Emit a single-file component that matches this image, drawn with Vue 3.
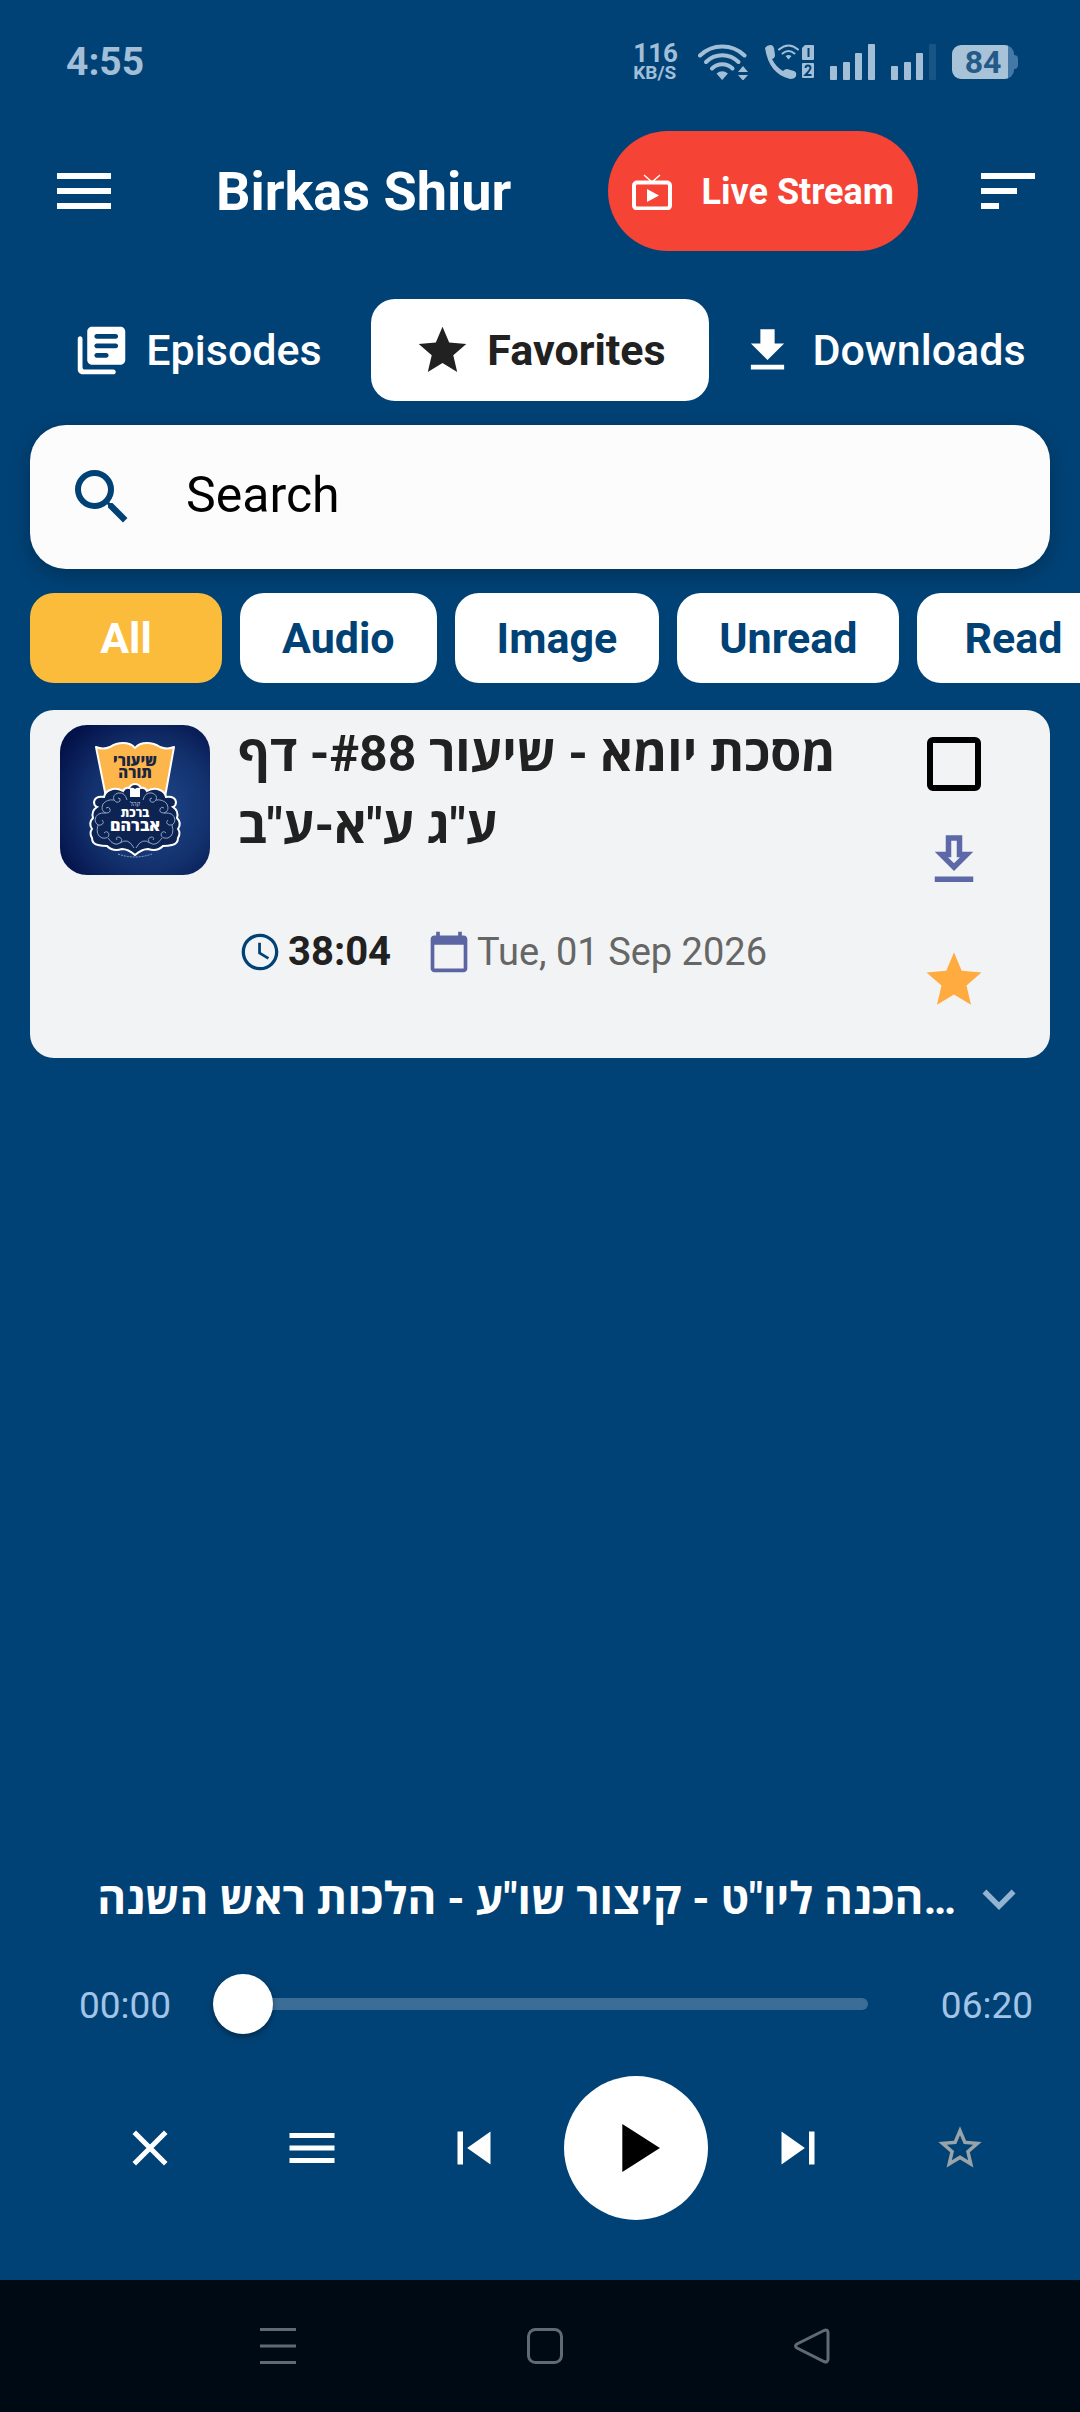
<template>
  <div class="app">
    <div class="status-bar">
      <span class="clock">4:55</span>
      <div class="status-icons">
        <div class="speed">
          <span class="speed-value">116</span>
          <span class="speed-unit">KB/S</span>
        </div>
        <svg class="wifi" viewBox="0 0 50 36">
          <g fill="none" stroke="currentColor" stroke-width="4" stroke-linecap="round">
            <path d="M2 11.500a32 32 0 0 1 44.500 0" />
            <path d="M8 18a23 23 0 0 1 32.500 0" />
            <path d="M14 24.500a14.500 14.500 0 0 1 20.500 0" />
          </g>
          <path d="M18.500 29.500q5.700-4.500 11.400 0l-5.700 6.500zM40 28l5-6 5 6zM40 31l5 5.500 5-5.500z" fill="currentColor" />
        </svg>
        <svg class="call" viewBox="0 0 50 36">
          <path d="M1 4q2-3 6-3 2 0 3 3l1 7q0 3-3 4 4 8 11 12 2-2 4-2l7 2q3 1 2 5-1 3-6 3Q5 30 1 4z" fill="currentColor" />
          <g fill="none" stroke="currentColor" stroke-width="2" stroke-linecap="round">
            <path d="M15 5.500q9.500-8 19 0" />
            <path d="M18.500 9.500q6-5 12 0" />
          </g>
          <path d="M21.500 12q3-2 6 0l-3 3.500z" fill="currentColor" />
          <path d="M41 1h8a1 1 0 0 1 1 1v13a1 1 0 0 1-1 1H39a1 1 0 0 1-1-1V4z" fill="currentColor" />
          <rect x="38" y="19" width="12" height="15" rx="1" fill="currentColor" />
          <path d="M44.500 4v9M41.500 24q0-2.500 2.500-2.500t2.500 2.500q0 1.500-5 7h6" fill="none" stroke="#004276" stroke-width="2" />
        </svg>
        <svg v-for="n in 2" :key="n" class="signal" viewBox="0 0 45 36">
          <rect x="0" y="22" width="7" height="14" rx="1" fill="currentColor" />
          <rect x="13" y="18" width="7" height="18" rx="1" fill="currentColor" />
          <rect x="25" y="9" width="7" height="27" rx="1" fill="currentColor" />
          <rect x="38" y="0" width="7" height="36" rx="1" fill="currentColor" :opacity="n === 1 ? 1 : 0.15" />
        </svg>
        <div class="battery">84</div>
      </div>
    </div>

    <header class="header">
      <button class="icon-btn" aria-label="Menu">
        <svg class="icon-72" viewBox="0 0 24 24"><path :d="icons.menu" /></svg>
      </button>
      <h1 class="app-title">Birkas Shiur</h1>
      <button class="live-btn">
        <svg class="tv" viewBox="0 0 40 36">
          <rect x="2" y="8.500" width="36" height="26" rx="3" fill="none" stroke="currentColor" stroke-width="4" />
          <path d="M12 1l8 7 8-7" fill="none" stroke="currentColor" stroke-width="1.500" />
          <path d="M15 15v13l12-6.500z" fill="currentColor" />
        </svg>
        Live Stream
      </button>
      <button class="icon-btn" aria-label="Sort">
        <svg class="icon-72" viewBox="0 0 24 24"><path :d="icons.sort" /></svg>
      </button>
    </header>

    <nav class="tabs">
      <button
        v-for="tab in tabs"
        :key="tab.name"
        class="tab"
        :class="{ active: activeTab === tab.name }"
        @click="activeTab = tab.name"
      >
        <svg class="tab-icon" viewBox="0 0 24 24"><path :d="tab.icon" /></svg>
        {{ tab.name }}
      </button>
    </nav>

    <label class="search">
      <svg class="icon-72" viewBox="0 0 24 24"><path :d="icons.search" /></svg>
      <input v-model="query" type="text" placeholder="Search" aria-label="Search" />
    </label>

    <div class="chips">
      <button
        v-for="chip in chips"
        :key="chip"
        class="chip"
        :class="{ active: activeChip === chip }"
        @click="activeChip = chip"
      >
        {{ chip }}
      </button>
    </div>

    <article class="card">
      <svg class="thumb" viewBox="0 0 150 150">
        <defs>
          <radialGradient id="night" cx="0.6" cy="0.55" r="0.7">
            <stop offset="0" stop-color="#20488c" />
            <stop offset="0.6" stop-color="#12306c" />
            <stop offset="1" stop-color="#04124a" />
          </radialGradient>
        </defs>
        <rect width="150" height="150" fill="url(#night)" />
        <path
          d="M36 22q7 3 14 0 6-4 13-4 8 0 12 5 4-5 12-5 7 0 13 4 7 3 14 0l-9 50H46z"
          fill="#fdb64b"
          stroke="#fff"
          stroke-width="2"
          stroke-linejoin="round"
        />
        <text x="75" y="41" class="logo-dark" font-size="15">שיעורי</text>
        <text x="75" y="53" class="logo-dark" font-size="15">תורה</text>
        <path
          d="M75 59q4 0 6 4 4-1 6 3 7-4 13-1 5 2 6 7 9-1 10 5 0 4-3 5 6 4 4 11 5 5 1 11 3 4 0 9 0 6-6 7-4 1-9 1-6 6-15 3-6 0-13 6-7-6-13-6-9 3-15-3-5 0-9-1-6-1-6-7-3-5 0-9-4-6 1-11-2-7 4-11-3-1-3-5 1-6 10-5 1-5 6-7 6-3 13 1 2-4 6-3 2-4 6-4z"
          fill="#0d2352"
          stroke="#fff"
          stroke-width="2"
        />
        <g fill="none" stroke="#8ea3c6" stroke-width="1">
          <path v-for="side in logoSides" :key="side" :transform="side" d="M67 75q-2-8-9-7-6 2-4 7 3 4 6 1 1-3-2-3M54 75q-7-1-11 4-3 7 3 9 5 0 4-4-1-3-4-1M46 88q-10-1-11 7 1 6 6 5 4-2 1-5M38 100q-3 10 4 13 7 1 7-4-2-4-5-1M48 113q6 9 12 5 4-4-1-6-4 0-2 3M60 118q8-6 14 5" />
        </g>
        <path d="M70 63q3-1 5 1 2-2 5-1v9H70z" fill="#fff" />
        <text x="75" y="81" class="logo-thin" font-size="6">קהל</text>
        <text x="75" y="92" class="logo-light" font-size="12">ברכת</text>
        <text x="75" y="106" class="logo-light" font-size="16">אברהם</text>
        <path d="M58 129q17 6 34 0" fill="none" stroke="#8ea3c6" stroke-width="1" stroke-dasharray="2 1" />
      </svg>
      <div class="card-body">
        <h2 class="card-title">{{ episode.title }}</h2>
        <div class="meta">
          <svg class="meta-icon clock-icon" viewBox="0 0 24 24"><path :d="icons.schedule" /></svg>
          <span class="duration">{{ episode.duration }}</span>
          <svg class="meta-icon calendar-icon" viewBox="0 0 24 24"><path :d="icons.calendar" /></svg>
          <time class="date">{{ episode.date }}</time>
        </div>
      </div>
      <div class="card-actions">
        <input v-model="selected" type="checkbox" class="check" aria-label="Mark as read" />
        <button class="icon-btn download" aria-label="Download">
          <svg class="icon-66" viewBox="0 0 24 24"><path :d="icons.downloadOutline" /></svg>
        </button>
        <button class="icon-btn favorite" aria-label="Favorite">
          <svg class="icon-66" viewBox="0 0 24 24"><path :d="icons.star" /></svg>
        </button>
      </div>
    </article>

    <section class="player">
      <div class="now-playing">
        <p class="track-title">{{ nowPlaying }}</p>
        <button class="icon-btn collapse" aria-label="Collapse">
          <svg class="icon-66" viewBox="0 0 24 24"><path :d="icons.expand" /></svg>
        </button>
      </div>
      <div class="progress">
        <span class="time">00:00</span>
        <input v-model="position" type="range" min="0" max="380" class="seek" aria-label="Seek" />
        <span class="time">06:20</span>
      </div>
      <div class="controls">
        <button class="icon-btn" aria-label="Close">
          <svg class="icon-60" viewBox="0 0 24 24"><path d="M5.700 5.700l12.600 12.600M18.300 5.700L5.700 18.300" stroke="currentColor" stroke-width="2" /></svg>
        </button>
        <button class="icon-btn" aria-label="Queue">
          <svg class="icon-60" viewBox="0 0 24 24"><path :d="icons.menu" /></svg>
        </button>
        <button class="icon-btn" aria-label="Previous">
          <svg class="icon-66" viewBox="0 0 24 24"><path :d="icons.previous" /></svg>
        </button>
        <button class="icon-btn play" aria-label="Play">
          <svg class="play-icon" viewBox="0 0 24 24"><path d="M8 5v14l11-7z" /></svg>
        </button>
        <button class="icon-btn" aria-label="Next">
          <svg class="icon-66" viewBox="0 0 24 24"><path :d="icons.next" /></svg>
        </button>
        <button class="icon-btn muted" aria-label="Add to favorites">
          <svg class="star-icon" viewBox="0 0 24 24"><path :d="icons.starBorder" /></svg>
        </button>
      </div>
    </section>

    <footer class="system-nav">
      <button class="icon-btn" aria-label="Recent apps">
        <svg class="nav-icon" viewBox="0 0 36 36"><path d="M0 1.500h36M0 18h36M0 34.500h36" /></svg>
      </button>
      <button class="icon-btn" aria-label="Home">
        <svg class="nav-icon" viewBox="0 0 36 36"><rect x="1.500" y="1.500" width="33" height="33" rx="7" /></svg>
      </button>
      <button class="icon-btn" aria-label="Back">
        <svg class="nav-icon" viewBox="0 0 36 36"><path d="M30 2.500L3 16q-3 2 0 4l27 13.500q4 1.500 4-2.500V5q0-4-4-2.500z" /></svg>
      </button>
    </footer>
  </div>
</template>

<script setup>
import { ref } from 'vue';

const icons = {
  menu: 'M3 18h18v-2H3v2zm0-5h18v-2H3v2zm0-7v2h18V6H3z',
  sort: 'M3 18h6v-2H3v2zM3 6v2h18V6H3zm0 7h12v-2H3v2z',
  search:
    'M15.500 14h-.79l-.28-.27A6.471 6.471 0 0 0 16 9.500 6.500 6.500 0 1 0 9.500 16c1.610 0 3.090-.59 4.230-1.570l.27.28v.79l5 4.990L20.490 19l-4.990-5zm-6 0C7.010 14 5 11.990 5 9.500S7.010 5 9.500 5 14 7.010 14 9.500 11.990 14 9.500 14z',
  library:
    'M3 6c-.55 0-1 .45-1 1v13c0 1.100.9 2 2 2h13c.55 0 1-.45 1-1s-.45-1-1-1H5c-.55 0-1-.45-1-1V7c0-.55-.45-1-1-1zm17-4H8c-1.100 0-2 .9-2 2v12c0 1.100.9 2 2 2h12c1.100 0 2-.9 2-2V4c0-1.100-.9-2-2-2zm-2 9h-8c-.55 0-1-.45-1-1s.45-1 1-1h8c.55 0 1 .45 1 1s-.45 1-1 1zm-4 4h-4c-.55 0-1-.45-1-1s.45-1 1-1h4c.55 0 1 .45 1 1s-.45 1-1 1zm4-8h-8c-.55 0-1-.45-1-1s.45-1 1-1h8c.55 0 1 .45 1 1s-.45 1-1 1z',
  star: 'M12 17.270L18.180 21l-1.640-7.030L22 9.240l-7.190-.61L12 2 9.190 8.630 2 9.240l5.460 4.730L5.820 21z',
  starBorder:
    'M22 9.240l-7.190-.62L12 2 9.190 8.630 2 9.240l5.460 4.730L5.820 21 12 17.270 18.180 21l-1.630-7.030L22 9.240zM12 15.400l-3.760 2.270 1-4.280-3.320-2.880 4.380-.38L12 6.100l1.710 4.040 4.380.38-3.320 2.880 1 4.280L12 15.400z',
  download: 'M19 9h-4V3H9v6H5l7 7 7-7zM5 18v2h14v-2H5z',
  downloadOutline: 'M19 9h-4V3H9v6H5l7 7 7-7zm-8 2V5h2v6h1.170L12 13.170 9.830 11H11zm-6 7h14v2H5z',
  schedule:
    'M11.990 2C6.470 2 2 6.480 2 12s4.470 10 9.990 10C17.520 22 22 17.520 22 12S17.520 2 11.990 2zM12 20.200a8.200 8.200 0 1 1 0-16.400 8.200 8.200 0 0 1 0 16.400zM12.500 7H11v6l5.200 3.100.8-1.300-4.500-2.600z',
  calendar:
    'M20 3h-1V1h-2v2H7V1H5v2H4c-1.100 0-2 .9-2 2v16c0 1.100.9 2 2 2h16c1.100 0 2-.9 2-2V5c0-1.100-.9-2-2-2zm0 18H4V8h16v13z',
  expand: 'M16.590 8.590L12 13.170 7.410 8.590 6 10l6 6 6-6z',
  previous: 'M6 6h2v12H6zm3.500 6l8.500 6V6z',
  next: 'M6 18l8.500-6L6 6v12zM16 6v12h2V6h-2z',
};

const tabs = [
  { name: 'Episodes', icon: icons.library },
  { name: 'Favorites', icon: icons.star },
  { name: 'Downloads', icon: icons.download },
];
const chips = ['All', 'Audio', 'Image', 'Unread', 'Read'];

const episode = {
  title: 'מסכת יומא - שיעור #88- דף ע"ג ע"א-ע"ב',
  duration: '38:04',
  date: 'Tue, 01 Sep 2026',
};
const nowPlaying = 'הכנה ליו"ט - קיצור שו"ע - הלכות ראש השנה…';

// the ornament is drawn once and mirrored
const logoSides = ['', 'translate(150 0) scale(-1 1)'];

const activeTab = ref('Favorites');
const activeChip = ref('All');
const query = ref('');
const selected = ref(false);
const position = ref(0);
</script>

<style>
body {
  margin: 0;
  background-color: #004276;
}
</style>

<style scoped>
.app {
  display: flex;
  flex-direction: column;
  min-height: 100vh;
  overflow: hidden;
  background-color: #004276;
  color: #fff;
  font-family: Roboto, 'Open Sans', sans-serif;
}

button,
input {
  font-family: inherit;
}

svg {
  display: block;
  flex-shrink: 0;
  fill: currentColor;
}

.icon-btn {
  display: flex;
  align-items: center;
  justify-content: center;
  padding: 0;
  border: none;
  background: none;
  color: inherit;
  cursor: pointer;
}

.icon-72 {
  width: 72px;
  height: 72px;
}

.icon-66 {
  width: 66px;
  height: 66px;
}

.icon-60 {
  width: 60px;
  height: 60px;
}

/* status bar */
.status-bar {
  display: flex;
  align-items: center;
  justify-content: space-between;
  height: 40px;
  padding: 42px 66px 0 66px;
  color: #a3bfd8;
}

.clock {
  font-size: 39px;
  font-weight: 700;
}

.status-icons {
  display: flex;
  align-items: center;
  gap: 16px;
}

.speed {
  display: flex;
  flex-direction: column;
  margin-right: 4px;
  font-weight: 700;
}

.speed-value {
  font-size: 26px;
  line-height: 22px;
}

.speed-unit {
  font-size: 19px;
  line-height: 18px;
}

.wifi,
.call {
  width: 50px;
  height: 36px;
}

.signal {
  width: 45px;
  height: 36px;
}

.battery {
  position: relative;
  width: 62px;
  height: 34px;
  border-radius: 9px;
  background: linear-gradient(to right, #a8c2d8 56px, #4478a6 56px);
  color: #235a88;
  font-size: 32px;
  font-weight: 700;
  line-height: 34px;
  text-align: center;
}

.battery::after {
  content: '';
  position: absolute;
  top: 10px;
  right: -4px;
  width: 4px;
  height: 14px;
  border-radius: 0 4px 4px 0;
  background-color: #4478a6;
}

/* header */
.header {
  display: flex;
  align-items: center;
  padding: 49px 36px 0 48px;
}

.app-title {
  margin: 0 0 0 96px;
  padding-top: 2px;
  font-size: 54px;
  font-weight: 700;
  line-height: 72px;
}

.live-btn {
  display: flex;
  align-items: center;
  justify-content: space-between;
  width: 310px;
  height: 120px;
  margin: 0 54px 0 auto;
  padding: 2px 24px 0;
  border: none;
  border-radius: 60px;
  background-color: #f54336;
  color: #fff;
  font-size: 36px;
  font-weight: 700;
}

.tv {
  width: 40px;
  height: 36px;
}

/* tabs */
.tabs {
  display: grid;
  grid-template-columns: 1fr 338px 1fr;
  margin-top: 48px;
  padding: 0 24px;
}

.tab {
  display: flex;
  align-items: center;
  justify-content: center;
  gap: 16px;
  height: 102px;
  padding: 0;
  border: none;
  border-radius: 24px;
  background: none;
  color: #fff;
  font-size: 43px;
  font-weight: 500;
}

.tab.active {
  background-color: #fff;
  color: #212121;
  font-weight: 700;
}

.tab-icon {
  width: 57px;
  height: 57px;
}

/* search */
.search {
  display: flex;
  align-items: center;
  gap: 48px;
  height: 144px;
  margin: 24px 30px 0;
  padding: 0 36px;
  border-radius: 36px;
  background-color: #fcfcfc;
  box-shadow: 0 6px 20px rgba(0, 0, 0, 0.25);
  color: #004276;
}

.search input {
  flex: 1;
  min-width: 0;
  padding: 0 0 4px;
  border: none;
  outline: none;
  background: none;
  color: #000;
  font-size: 50px;
}

.search input::placeholder {
  color: #000;
  opacity: 1;
}

/* filter chips */
.chips {
  display: flex;
  gap: 18px;
  margin-top: 24px;
  padding-left: 30px;
}

.chip {
  flex-shrink: 0;
  min-width: 192px;
  height: 90px;
  padding: 0 42px;
  border: none;
  border-radius: 24px;
  background-color: #fff;
  color: #004276;
  font-size: 43px;
  font-weight: 700;
}

.chip.active {
  background-color: #fbbc3b;
  color: #fff;
}

/* episode card */
.card {
  display: flex;
  align-items: flex-start;
  margin: 27px 30px 0;
  padding-left: 30px;
  min-height: 348px;
  border-radius: 24px;
  background-color: #f1f3f4;
  color: #212121;
}

.thumb {
  width: 150px;
  height: 150px;
  margin-top: 15px;
  border-radius: 27px;
}

.logo-dark,
.logo-light,
.logo-thin {
  font-family: 'Open Sans', sans-serif;
  font-weight: 800;
  text-anchor: middle;
}

.logo-dark {
  fill: #1b2440;
}

.logo-light {
  fill: #fff;
}

.logo-thin {
  fill: #c5d0e4;
  font-weight: 400;
}

.card-body {
  flex: 1;
  min-width: 0;
  margin-left: 28px;
  padding-top: 8px;
}

.card-title {
  margin: 0;
  font-size: 50px;
  font-weight: 700;
  line-height: 72px;
}

.meta {
  display: flex;
  align-items: center;
  margin-top: 66px;
  font-size: 38px;
  line-height: 48px;
}

.meta-icon {
  width: 44px;
  height: 44px;
}

.clock-icon {
  color: #004276;
}

.calendar-icon {
  margin-left: 36px;
  color: #5c65a3;
}

.duration {
  margin-left: 6px;
  font-size: 40px;
  font-weight: 700;
}

.date {
  margin-left: 6px;
  color: #666;
}

.card-actions {
  display: flex;
  flex-direction: column;
  align-items: center;
  width: 192px;
}

.check {
  appearance: none;
  width: 54px;
  height: 54px;
  margin: 27px 0 36px;
  border: 6px solid #000;
  border-radius: 6px;
}

.check:checked {
  background-color: #000;
}

.download {
  color: #5c68a8;
}

.favorite {
  margin-top: 54px;
  color: #ffab40;
}

/* player */
.player {
  margin-top: auto;
  padding: 0 39px 60px 69px;
}

.now-playing {
  display: flex;
  align-items: center;
  gap: 10px;
  padding-left: 20px;
}

.track-title {
  flex: 1;
  min-width: 0;
  margin: 0;
  overflow: hidden;
  font-size: 44px;
  font-weight: 700;
  line-height: 66px;
  text-align: right;
  white-space: nowrap;
}

.collapse {
  margin-right: 9px;
  color: #94b3d0;
}

.progress {
  display: flex;
  align-items: center;
  justify-content: space-between;
  margin-top: 42px;
  padding: 0 8px 0 10px;
}

.time {
  padding-top: 2px;
  color: #a3c4e6;
  font-size: 37px;
}

.seek {
  appearance: none;
  flex: 1;
  height: 60px;
  margin: 0 73px 0 42px;
  background: none;
}

.seek::-webkit-slider-runnable-track {
  height: 12px;
  border-radius: 6px;
  background-color: #3c6d96;
}

.seek::-webkit-slider-thumb {
  appearance: none;
  width: 60px;
  height: 60px;
  margin-top: -24px;
  border-radius: 50%;
  background-color: #fff;
  box-shadow: 0 3px 6px rgba(0, 0, 0, 0.35);
}

.controls {
  display: grid;
  grid-template-columns: repeat(6, 1fr);
  align-items: center;
  justify-items: center;
  margin-top: 42px;
}

.play {
  width: 144px;
  height: 144px;
  border-radius: 50%;
  background-color: #fff;
  color: #000;
}

.play-icon {
  width: 82px;
  height: 82px;
}

.star-icon {
  width: 52px;
  height: 52px;
}

.muted {
  color: #9aa3a8;
}

/* system navigation */
.system-nav {
  display: grid;
  grid-template-columns: repeat(3, 1fr);
  align-items: center;
  height: 132px;
  padding: 0 135px 0 144px;
  background-color: #000a14;
  color: #5f6b74;
}

.nav-icon {
  width: 36px;
  height: 36px;
  fill: none;
  stroke: currentColor;
  stroke-width: 3;
}
</style>
